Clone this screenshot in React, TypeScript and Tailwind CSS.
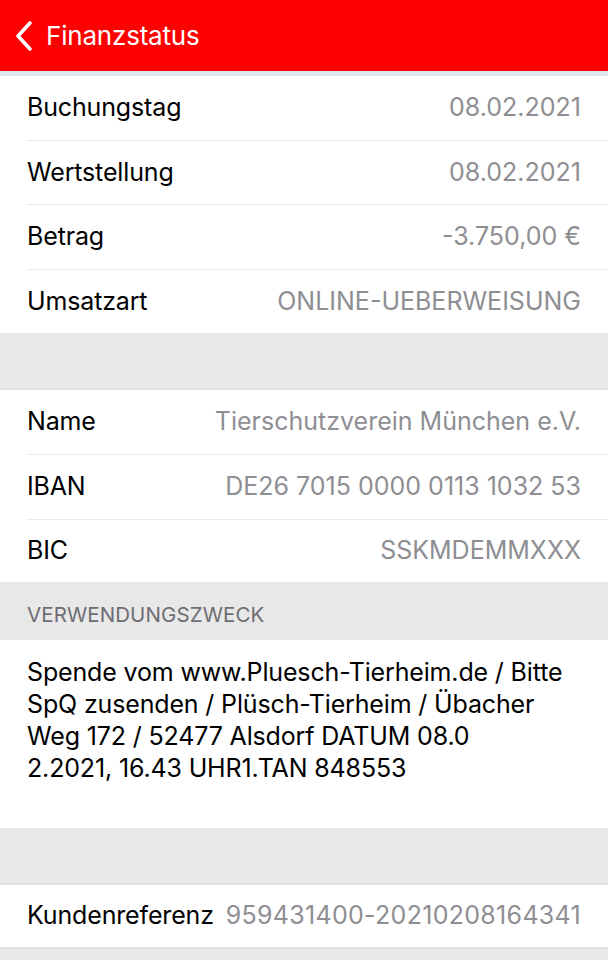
import React from "react";

const font = { fontFamily: "Inter, 'Noto Sans', 'Liberation Sans', sans-serif" };

function Row({ label, value, h, last }: { label: string; value: string; h: string; last?: boolean }) {
  return (
    <div className="pl-[27px] bg-white">
      <div className={`flex items-center justify-between ${h} pr-[27px] ${last ? "" : "border-b border-[#ebebeb]"}`}>
        <span className="text-[25px] text-black tracking-[-0.15px]">{label}</span>
        <span className="text-[25px] text-[#8e8e93] tracking-[0px] whitespace-nowrap">{value}</span>
      </div>
    </div>
  );
}

export default function App() {
  return (
    <div className="w-[608px] h-[960px] bg-[#e8e8e8] overflow-hidden" style={font}>
      <div className="h-[71px] bg-[#fe0000] flex items-center pl-[14px]">
        <svg width="20" height="32" viewBox="0 0 20 32" fill="none">
          <path d="M16 3 L4 16 L16 29" stroke="white" strokeWidth="3.6" strokeLinecap="round" strokeLinejoin="round" />
        </svg>
        <span className="ml-[12px] text-white text-[26px] tracking-[-0.2px]">Finanzstatus</span>
      </div>
      <div className="h-[5px] bg-[#e0e8ed]" />
      <div>
        <Row label="Buchungstag" value="08.02.2021" h="h-[65px]" />
        <Row label="Wertstellung" value="08.02.2021" h="h-[64px]" />
        <Row label="Betrag" value="-3.750,00 €" h="h-[65px]" />
        <Row label="Umsatzart" value="ONLINE-UEBERWEISUNG" h="h-[63px]" last />
      </div>
      <div className="h-[57px] border-b-2 border-[#e1e1e1]" />
      <div>
        <Row label="Name" value="Tierschutzverein München e.V." h="h-[65px]" />
        <Row label="IBAN" value="DE26 7015 0000 0113 1032 53" h="h-[65px]" />
        <Row label="BIC" value="SSKMDEMMXXX" h="h-[62px]" last />
      </div>
      <div className="h-[58px] flex items-center pl-[27px] pt-[8px]">
        <span className="text-[20.5px] text-[#6d6d72] tracking-[0.1px]">VERWENDUNGSZWECK</span>
      </div>
      <div className="bg-white h-[188px] pl-[27px] pr-[20px] pt-[16px]">
        <p className="text-[25px] leading-[32px] text-black tracking-[-0.15px] whitespace-nowrap">
          Spende vom www.Pluesch-Tierheim.de / Bitte
          <br />
          SpQ zusenden / Plüsch-Tierheim / Übacher
          <br />
          Weg 172 / 52477 Alsdorf DATUM 08.0
          <br />
          2.2021, 16.43 UHR1.TAN 848553
        </p>
      </div>
      <div className="h-[57px] border-b-2 border-[#e1e1e1]" />
      <div className="pl-[27px] bg-white border-b-2 border-[#e1e1e1]">
        <div className="flex items-center justify-between h-[62px] pr-[27px]">
          <span className="text-[25px] text-black tracking-[-0.15px]">Kundenreferenz</span>
          <span className="text-[25px] text-[#8e8e93] tracking-[0.3px] whitespace-nowrap">959431400-20210208164341</span>
        </div>
      </div>
    </div>
  );
}
